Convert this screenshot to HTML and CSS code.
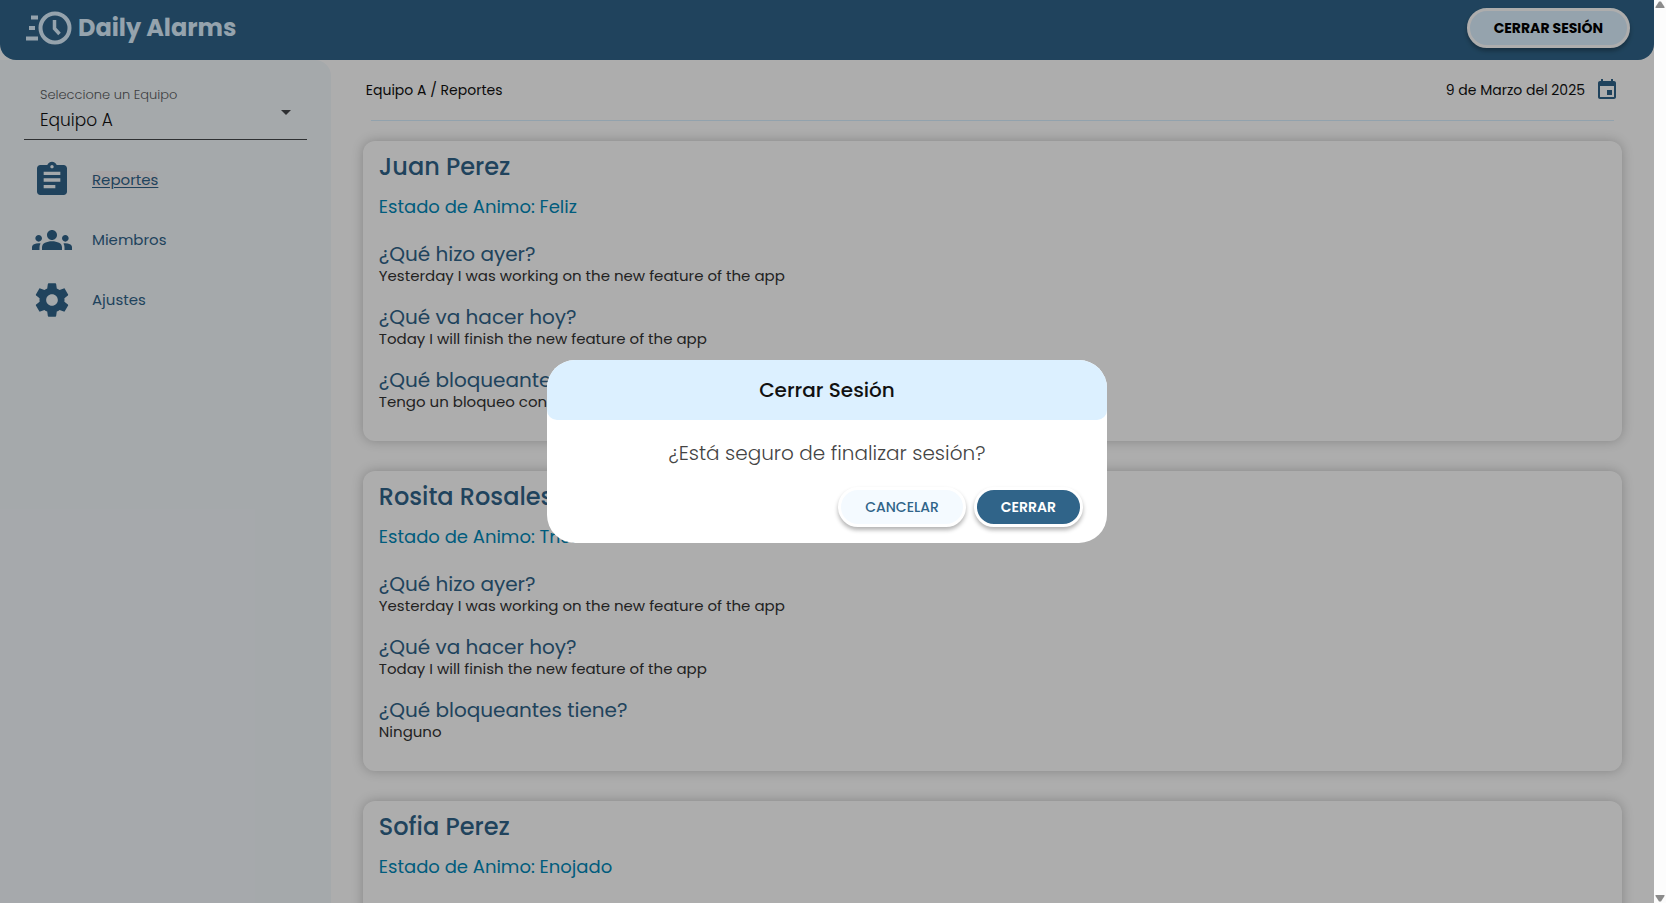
FILE: index.html
```html
<!DOCTYPE html>
<html lang="es">
<head>
<meta charset="utf-8">
<title>Daily Alarms</title>
<link rel="stylesheet" href="styles.css">
</head>
<body>
<div class="page">
  <header class="topbar">
    <a class="brand" href="#">
      <svg class="brand-icon" viewBox="0 0 46 34" aria-hidden="true">
        <g fill="none" stroke="currentColor" stroke-width="4">
          <circle cx="29" cy="17" r="14.5"/>
          <path d="M28.500 9v8.500l5 5.500" stroke-width="3.500"/>
          <path d="M5 6.500h7M3 17h6M0 27.500h12"/>
        </g>
      </svg>
      <span>Daily Alarms</span>
    </a>
    <button class="btn btn-logout" type="button">CERRAR SESIÓN</button>
  </header>
  <div class="layout">
    <aside class="sidebar">
      <div class="field">
        <label class="field-label" for="team">Seleccione un Equipo</label>
        <select class="field-select" id="team"><option>Equipo A</option></select>
        <svg class="field-arrow" viewBox="0 0 10 5" aria-hidden="true"><path d="M0 0h10L5 5z" fill="currentColor"/></svg>
      </div>
      <nav class="nav">
        <a class="nav-item active" href="#">
          <svg class="nav-icon" viewBox="0 0 24 24" aria-hidden="true"><path d="M19 3h-4.180C14.400 1.840 13.300 1 12 1c-1.300 0-2.400.84-2.820 2H5c-1.100 0-2 .9-2 2v14c0 1.100.9 2 2 2h14c1.100 0 2-.9 2-2V5c0-1.100-.9-2-2-2zm-7 0c.55 0 1 .45 1 1s-.45 1-1 1-1-.45-1-1 .45-1 1-1zm2 14H7v-2h7v2zm3-4H7v-2h10v2zm0-4H7V7h10v2z"/></svg>
          <span class="nav-text">Reportes</span>
        </a>
        <a class="nav-item" href="#">
          <svg class="nav-icon" viewBox="0 0 24 24" aria-hidden="true"><path d="M4 13c1.100 0 2-.9 2-2s-.9-2-2-2-2 .9-2 2 .9 2 2 2zm1.130 1.100c-.37-.06-.74-.1-1.130-.1-.99 0-1.930.21-2.780.58C.48 14.900 0 15.620 0 16.430V18h4.500v-1.610c0-.83.23-1.610.63-2.290zM20 13c1.100 0 2-.9 2-2s-.9-2-2-2-2 .9-2 2 .9 2 2 2zm4 3.430c0-.81-.48-1.530-1.220-1.850-.85-.37-1.790-.58-2.780-.58-.39 0-.76.04-1.130.1.4.68.63 1.460.63 2.290V18H24v-1.570zM16.240 13.650c-1.170-.52-2.610-.9-4.240-.9-1.630 0-3.070.39-4.240.9C6.680 14.130 6 15.210 6 16.390V18h12v-1.610c0-1.180-.68-2.260-1.760-2.740zM12 6c1.660 0 3 1.340 3 3s-1.340 3-3 3-3-1.340-3-3 1.340-3 3-3z"/></svg>
          <span class="nav-text">Miembros</span>
        </a>
        <a class="nav-item" href="#">
          <svg class="nav-icon" viewBox="0 0 24 24" aria-hidden="true"><path d="M19.430 12.980c.04-.32.07-.64.07-.98s-.03-.66-.07-.98l2.110-1.650c.19-.15.24-.42.12-.64l-2-3.460c-.12-.22-.39-.3-.61-.22l-2.490 1c-.52-.4-1.080-.73-1.690-.98l-.38-2.650C14.460 2.180 14.250 2 14 2h-4c-.25 0-.46.18-.49.42l-.38 2.650c-.61.25-1.170.59-1.690.98l-2.490-1c-.23-.09-.49 0-.61.22l-2 3.460c-.13.22-.07.49.12.64l2.110 1.650c-.04.32-.07.65-.07.98s.03.66.07.98l-2.110 1.650c-.19.15-.24.42-.12.64l2 3.460c.12.22.39.3.61.22l2.490-1c.52.4 1.080.73 1.690.98l.38 2.650c.03.24.24.42.49.42h4c.25 0 .46-.18.49-.42l.38-2.650c.61-.25 1.170-.59 1.690-.98l2.490 1c.23.09.49 0 .61-.22l2-3.460c.12-.22.07-.49-.12-.64l-2.110-1.650zM12 15.500c-1.930 0-3.500-1.570-3.500-3.500s1.570-3.500 3.500-3.500 3.500 1.570 3.500 3.500-1.570 3.500-3.500 3.500z"/></svg>
          <span class="nav-text">Ajustes</span>
        </a>
      </nav>
    </aside>
    <main class="content">
      <div class="content-head">
        <span>Equipo A / Reportes</span>
        <div class="date">
          <span>9 de Marzo del 2025</span>
          <button class="date-button" type="button" aria-label="Elegir fecha">
            <svg class="date-icon" viewBox="0 0 24 24" aria-hidden="true"><path d="M17 12h-5v5h5v-5zM16 1v2H8V1H6v2H5c-1.110 0-1.990.9-1.990 2L3 19c0 1.100.89 2 2 2h14c1.100 0 2-.9 2-2V5c0-1.100-.9-2-2-2h-1V1h-2zm3 18H5V8h14v11z"/></svg>
          </button>
        </div>
      </div>
      <hr class="rule">
      <div class="cards">
        <article class="card">
          <h2 class="card-name">Juan Perez</h2>
          <p class="card-mood">Estado de Animo: Feliz</p>
          <h3 class="card-question">¿Qué hizo ayer?</h3>
          <p class="card-answer">Yesterday I was working on the new feature of the app</p>
          <h3 class="card-question">¿Qué va hacer hoy?</h3>
          <p class="card-answer">Today I will finish the new feature of the app</p>
          <h3 class="card-question">¿Qué bloqueantes tiene?</h3>
          <p class="card-answer">Tengo un bloqueo con la base de datos</p>
        </article>
        <article class="card">
          <h2 class="card-name">Rosita Rosales</h2>
          <p class="card-mood">Estado de Animo: Triste</p>
          <h3 class="card-question">¿Qué hizo ayer?</h3>
          <p class="card-answer">Yesterday I was working on the new feature of the app</p>
          <h3 class="card-question">¿Qué va hacer hoy?</h3>
          <p class="card-answer">Today I will finish the new feature of the app</p>
          <h3 class="card-question">¿Qué bloqueantes tiene?</h3>
          <p class="card-answer">Ninguno</p>
        </article>
        <article class="card">
          <h2 class="card-name">Sofia Perez</h2>
          <p class="card-mood">Estado de Animo: Enojado</p>
        </article>
      </div>
    </main>
  </div>
  <div class="backdrop">
    <section class="dialog" role="dialog" aria-modal="true" aria-labelledby="dialog-title">
      <h2 class="dialog-title" id="dialog-title">Cerrar Sesión</h2>
      <p class="dialog-text">¿Está seguro de finalizar sesión?</p>
      <div class="dialog-actions">
        <button class="btn btn-cancel" type="button">CANCELAR</button>
        <button class="btn btn-confirm" type="button">CERRAR</button>
      </div>
    </section>
  </div>
</div>
<div class="scrollbar" aria-hidden="true">
  <svg class="scroll-arrow" viewBox="0 0 10 7"><path d="M4 .5h2L9.500 6v1h-9V6z"/></svg>
  <svg class="scroll-arrow" viewBox="0 0 10 7"><path d="M4 6.500h2L9.500 1V0h-9v1z"/></svg>
</div>
</body>
</html>
```
FILE: styles.css
```css
:root {
  --blue: #306489;
  --sky: #dcf0ff;
  --ice: #f4faff;
}

* { box-sizing: border-box; }

body {
  margin: 0;
  display: flex;
  height: 100vh;
  overflow: hidden;
  background: #fff;
  color: #111;
  font-family: Poppins, Inter, "Open Sans", sans-serif;
  font-size: 14px;
}

h2, h3, p { margin: 0; }
a { color: inherit; text-decoration: none; }
button, select { font-family: inherit; }

.page {
  position: relative;
  flex: 1;
  min-width: 0;
  display: flex;
  flex-direction: column;
  overflow: hidden;
}

.topbar {
  flex: none;
  display: flex;
  align-items: flex-start;
  justify-content: space-between;
  padding: 8px 24px 12px 26px;
  border-radius: 0 0 16px 16px;
  background: var(--blue);
}

.brand {
  display: flex;
  align-items: center;
  gap: 6px;
  height: 39px;
  color: var(--sky);
  font-size: 24px;
  font-weight: 700;
}

.brand-icon { width: 46px; height: 34px; }

.btn {
  height: 40px;
  padding: 0 24px;
  border: 3px solid #fff;
  border-radius: 20px;
  box-shadow: 0 3px 4px rgba(0, 0, 0, 0.3);
  font-size: 14px;
  cursor: pointer;
}

.btn-logout { background: var(--sky); color: #000; font-weight: 700; }
.btn-cancel { background: var(--ice); color: var(--blue); font-weight: 500; }
.btn-confirm { background: var(--blue); color: #fff; font-weight: 600; }

.layout { flex: 1; min-height: 0; display: flex; }

.sidebar {
  flex: none;
  width: 20%;
  padding: 24px;
  border-radius: 0 16px 0 0;
  background: #f4f9fd;
}

.field {
  position: relative;
  border-bottom: 1px solid #45484b;
}

.field-label {
  position: absolute;
  top: 3px;
  left: 16px;
  color: #5a5d60;
  font-size: 13px;
  line-height: 16px;
  font-weight: 300;
}

.field-select {
  display: block;
  width: 100%;
  height: 55px;
  padding: 16px 16px 0;
  border: 0;
  background: transparent;
  color: #111;
  font-size: 17px;
  font-weight: 300;
  appearance: none;
}

.field-arrow {
  position: absolute;
  top: 26px;
  right: 16px;
  width: 10px;
  height: 5px;
  color: #45484b;
  pointer-events: none;
}

.nav {
  display: flex;
  flex-direction: column;
  gap: 20px;
  padding: 20px 8px;
}

.nav-item {
  display: flex;
  align-items: center;
  gap: 20px;
  height: 40px;
  color: var(--blue);
  font-size: 15px;
}

.nav-icon { width: 40px; height: 40px; fill: currentColor; }
.nav-text { line-height: 18px; }

.active .nav-text {
  border-radius: 6px;
  background: #f5f1f2;
  text-decoration: underline;
  text-underline-offset: 2px;
}

.content {
  flex: 1;
  min-width: 0;
  padding: 10px 32px 0;
}

.content-head {
  display: flex;
  align-items: center;
  justify-content: space-between;
  height: 40px;
  padding: 0 3px;
}

.date { display: flex; align-items: center; gap: 10px; }

.date-button {
  display: flex;
  padding: 0;
  border: 0;
  background: transparent;
  color: var(--blue);
}

.date-icon { width: 24px; height: 24px; fill: currentColor; }

.rule {
  height: 1px;
  margin: 10px 8px 20px;
  border: 0;
  background: #d8efff;
}

.cards { display: flex; flex-direction: column; gap: 30px; }

.card {
  min-height: 300px;
  padding: 8px 16px 29px;
  border-radius: 12px;
  background: #fff;
  box-shadow: 0 0 12px rgba(0, 0, 0, 0.24);
}

.card-name {
  color: var(--blue);
  font-size: 24px;
  line-height: 36px;
  font-weight: 500;
}

.card-mood {
  margin: 8px 0 21px;
  color: #0088b8;
  font-size: 18px;
  line-height: 28px;
}

.card-question {
  color: var(--blue);
  font-size: 20px;
  line-height: 24px;
  font-weight: 400;
}

.card-answer { color: #333; font-size: 15px; line-height: 20px; }
.card-answer + .card-question { margin-top: 19px; }

.backdrop {
  position: absolute;
  inset: 0;
  display: flex;
  align-items: center;
  justify-content: center;
  background: rgba(0, 0, 0, 0.32);
}

.dialog {
  width: 560px;
  max-width: 90%;
  overflow: hidden;
  border-radius: 28px;
  background: #fff;
}

.dialog-title {
  padding: 16px 24px;
  border-radius: 0 0 10px 10px;
  background: var(--sky);
  color: #111;
  font-size: 20px;
  line-height: 28px;
  font-weight: 500;
  text-align: center;
}

.dialog-text {
  padding: 18px 24px;
  color: #444;
  font-size: 20px;
  line-height: 31px;
  font-weight: 300;
  text-align: center;
}

.dialog-actions {
  display: flex;
  justify-content: flex-end;
  gap: 8px;
  padding: 0 24px 16px;
}

.scrollbar {
  flex: none;
  display: flex;
  flex-direction: column;
  align-items: center;
  justify-content: space-between;
  width: 12px;
  padding: 1px 0;
  background: #fcfcfc;
}

.scroll-arrow { width: 10px; height: 7px; fill: #8b8b8b; }
```
